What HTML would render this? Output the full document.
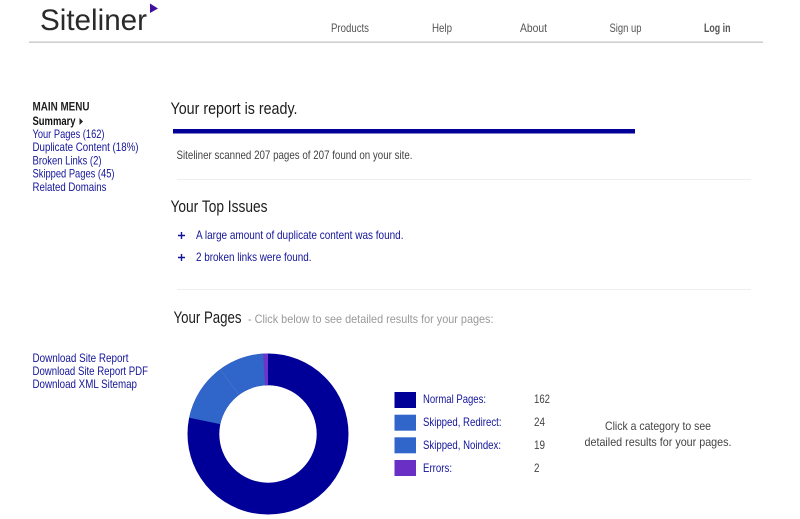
<!DOCTYPE html>
<html lang="en">
<head>
<meta charset="utf-8">
<title>Siteliner</title>
<style>
html,body{margin:0;padding:0;background:#fff;width:800px;height:519px;overflow:hidden}
svg{display:block;filter:blur(.35px)}
text{font-family:"Liberation Sans",sans-serif;font-size:12px;fill:#444}
.l{fill:#14149a}
.h{fill:#1c1c1c;font-size:17px}
.n{fill:#555}
.g{fill:#999}
</style>
</head>
<body>
<svg width="800" height="519" viewBox="0 0 800 519" xmlns="http://www.w3.org/2000/svg">
<rect width="800" height="519" fill="#fff"/>
<text x="40" y="30" style="font-size:30px;fill:#2a2a2a" textLength="107" lengthAdjust="spacingAndGlyphs">Siteliner</text>
<polygon points="150,3.500 158,8.500 150,13" fill="#400f9e"/>
<text class="n" x="331" y="32" textLength="38" lengthAdjust="spacingAndGlyphs">Products</text>
<text class="n" x="432" y="32" textLength="20" lengthAdjust="spacingAndGlyphs">Help</text>
<text class="n" x="520" y="32" textLength="27" lengthAdjust="spacingAndGlyphs">About</text>
<text class="n" x="609.500" y="32" textLength="32" lengthAdjust="spacingAndGlyphs">Sign up</text>
<text class="n" x="704" y="32" font-weight="bold" textLength="26.500" lengthAdjust="spacingAndGlyphs">Log in</text>
<rect x="29" y="41.500" width="734" height="1.300" fill="#c4c4c4"/>

<text x="32.500" y="110.700" font-weight="bold" style="fill:#222" textLength="57" lengthAdjust="spacingAndGlyphs">MAIN MENU</text>
<text x="32.500" y="125" font-weight="bold" style="fill:#111" textLength="43" lengthAdjust="spacingAndGlyphs">Summary</text>
<polygon points="79.500,118 83,121.500 79.500,125" fill="#222"/>
<text class="l" x="32.500" y="138" textLength="72" lengthAdjust="spacingAndGlyphs">Your Pages (162)</text>
<text class="l" x="32.500" y="151" textLength="106" lengthAdjust="spacingAndGlyphs">Duplicate Content (18%)</text>
<text class="l" x="32.500" y="164.300" textLength="69" lengthAdjust="spacingAndGlyphs">Broken Links (2)</text>
<text class="l" x="32.500" y="177.700" textLength="82" lengthAdjust="spacingAndGlyphs">Skipped Pages (45)</text>
<text class="l" x="32.500" y="191" textLength="74" lengthAdjust="spacingAndGlyphs">Related Domains</text>

<text class="l" x="32.500" y="362" textLength="96" lengthAdjust="spacingAndGlyphs">Download Site Report</text>
<text class="l" x="32.500" y="375" textLength="115.500" lengthAdjust="spacingAndGlyphs">Download Site Report PDF</text>
<text class="l" x="32.500" y="388" textLength="104.500" lengthAdjust="spacingAndGlyphs">Download XML Sitemap</text>

<text class="h" x="170.500" y="114" textLength="127" lengthAdjust="spacingAndGlyphs">Your report is ready.</text>
<rect x="173" y="129" width="462" height="4.500" fill="#000099"/>
<text x="176.500" y="159" textLength="236" lengthAdjust="spacingAndGlyphs">Siteliner scanned 207 pages of 207 found on your site.</text>
<rect x="177" y="179" width="574" height="1" fill="#eeeeee"/>

<text class="h" x="170.500" y="212" textLength="97" lengthAdjust="spacingAndGlyphs">Your Top Issues</text>
<path d="M178 235.500h7M181.500 232v7" stroke="#14149a" stroke-width="1.400" fill="none"/>
<text class="l" x="196" y="239" textLength="207.500" lengthAdjust="spacingAndGlyphs">A large amount of duplicate content was found.</text>
<path d="M178 257.500h7M181.500 254v7" stroke="#14149a" stroke-width="1.400" fill="none"/>
<text class="l" x="196" y="261" textLength="115.500" lengthAdjust="spacingAndGlyphs">2 broken links were found.</text>
<rect x="177" y="289" width="574" height="1" fill="#eeeeee"/>

<text class="h" x="173.500" y="323" textLength="68" lengthAdjust="spacingAndGlyphs">Your Pages</text>
<text class="g" x="248" y="323" textLength="245.500" lengthAdjust="spacingAndGlyphs">- Click below to see detailed results for your pages:</text>

<circle cx="268" cy="434" r="64.600" fill="none" stroke="#000099" stroke-width="31.800"/>
<path d="M189.200 417.700A80.500 80.500 0 0 1 268 353.500L268 385.300A48.700 48.700 0 0 0 220.300 424.100Z" fill="#3066c9"/>
<path d="M220.100 369.300L239 394.800" stroke="#4a76c8" stroke-width=".6" fill="none"/>
<path d="M263.100 353.650A80.500 80.500 0 0 1 268 353.500L268 385.300A48.700 48.700 0 0 0 265.040 385.400Z" fill="#6c35c8"/>

<rect x="394.500" y="392" width="21.500" height="16" fill="#000099"/>
<rect x="394.500" y="414.700" width="21.500" height="16" fill="#3066c9"/>
<rect x="394.500" y="437.300" width="21.500" height="16" fill="#3066c9"/>
<rect x="394.500" y="460" width="21.500" height="16" fill="#6a30c6"/>
<text class="l" x="423" y="403" textLength="63" lengthAdjust="spacingAndGlyphs">Normal Pages:</text>
<text class="l" x="423" y="426" textLength="78.500" lengthAdjust="spacingAndGlyphs">Skipped, Redirect:</text>
<text class="l" x="423" y="449" textLength="78" lengthAdjust="spacingAndGlyphs">Skipped, Noindex:</text>
<text class="l" x="423" y="472" textLength="29" lengthAdjust="spacingAndGlyphs">Errors:</text>
<text x="534" y="403" textLength="16" lengthAdjust="spacingAndGlyphs">162</text>
<text x="534" y="426" textLength="11" lengthAdjust="spacingAndGlyphs">24</text>
<text x="534" y="449" textLength="11" lengthAdjust="spacingAndGlyphs">19</text>
<text x="534" y="472" textLength="5.500" lengthAdjust="spacingAndGlyphs">2</text>
<text x="605" y="430" textLength="106" lengthAdjust="spacingAndGlyphs">Click a category to see</text>
<text x="584.500" y="446" textLength="147" lengthAdjust="spacingAndGlyphs">detailed results for your pages.</text>
</svg>
</body>
</html>
